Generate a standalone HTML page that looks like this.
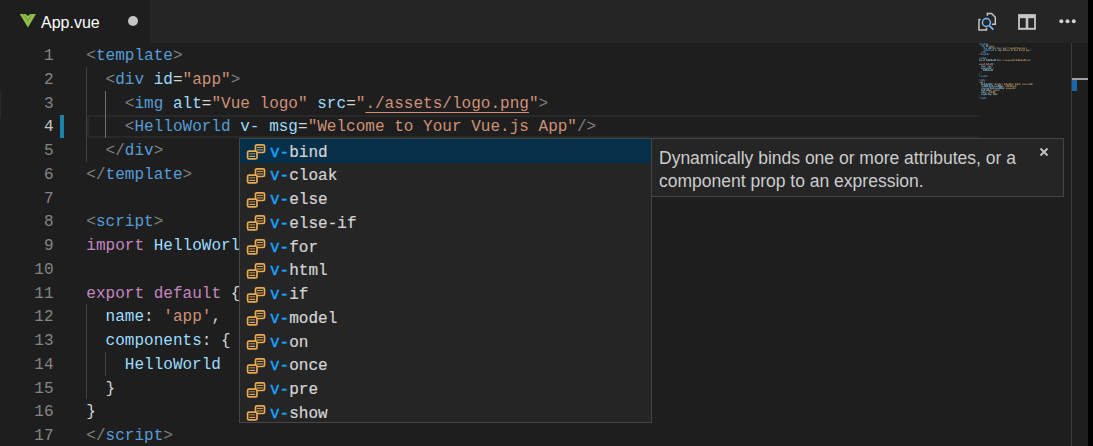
<!DOCTYPE html>
<html><head><meta charset="utf-8"><style>
html,body{margin:0;padding:0;width:1093px;height:446px;overflow:hidden;background:#1e1e1e;}
*{box-sizing:border-box;}
.abs{position:absolute;}
.mono{font-family:"Liberation Mono",monospace;}
.sans{font-family:"Liberation Sans",sans-serif;}
.ln{position:absolute;height:23.75px;line-height:23.75px;white-space:pre;font-size:16.04px;}
.num{position:absolute;left:0;width:53.6px;text-align:right;color:#858585;height:23.75px;line-height:23.75px;font-size:16.04px;}
.code{left:86.3px;}
.u{text-decoration:underline;text-underline-offset:4px;text-decoration-skip-ink:none;}
.guide{position:absolute;width:1px;background:#404040;}
.item{position:absolute;left:0;width:411px;height:23.75px;line-height:23.75px;font-size:16.04px;white-space:pre;color:#d4d4d4;}
.item .h{color:#18a3ff;-webkit-text-stroke:0.35px #18a3ff;}
.item>span{-webkit-text-stroke:0.2px #d4d4d4;}
.mm{position:absolute;height:2px;}
</style></head><body>

<div class="abs" style="left:1088px;top:0;width:5px;height:446px;background:#000"></div>
<div class="abs" style="left:0;top:91px;width:1px;height:27px;background:#2a2a2a"></div>
<div class="abs" style="left:0;top:0;width:1088px;height:43px;background:#252526"></div>
<div class="abs" style="left:0;top:0;width:150px;height:43px;background:#1e1e1e"></div>
<svg class="abs" style="left:19px;top:13px" width="18" height="16" viewBox="0 0 18 16">
<path d="M0.8 1 L17 1 L8.9 14.4 Z" fill="#8dc149"/>
<path d="M6.6 1 L8.9 3 L11.2 1 Z" fill="#1e1e1e"/>
<path d="M4.4 1.2 L8.9 8.1 L12.6 1.5" fill="none" stroke="#6b6a2c" stroke-width="0.9" stroke-dasharray="1.1 0.7"/>
</svg>
<div class="abs sans" style="left:41px;top:11px;font-size:16px;line-height:24px;color:#ffffff;white-space:pre">App.vue</div>
<div class="abs" style="left:128px;top:16px;width:10px;height:10px;border-radius:50%;background:#c5c5c5"></div>
<svg class="abs" style="left:970px;top:5px" width="110" height="34" viewBox="0 0 110 34">
<g fill="none" stroke="#c5c5c5" stroke-width="1.5">
<path d="M17.4 10.8 V8.5 H21.6 L25.3 12.2 V19.3 H21.8"/>
<path d="M10.6 14.4 H9 V24.9 H16.5 V22.8"/>
</g>
<circle cx="16.4" cy="17.55" r="3.95" fill="none" stroke="#75beff" stroke-width="1.5"/>
<path d="M19.3 20.7 L23.4 24.6" stroke="#75beff" stroke-width="1.6"/>
<rect x="48.1" y="9.1" width="17.8" height="15.7" fill="#c5c5c5"/>
<rect x="49.9" y="13.2" width="5.8" height="9.6" fill="#252526"/>
<rect x="58.3" y="13.2" width="5.8" height="9.6" fill="#252526"/>
<circle cx="91.3" cy="16.3" r="2" fill="#d0d0d0"/>
<circle cx="97.5" cy="16.3" r="2" fill="#d0d0d0"/>
<circle cx="103.8" cy="16.3" r="2" fill="#d0d0d0"/>
</svg>
<div class="abs" style="left:87.3px;top:115px;width:891.7px;height:23px;border:2px solid #282828;border-right:none"></div>
<div class="abs" style="left:60px;top:115px;width:4px;height:23px;background:#1a82ad"></div>
<div class="guide" style="left:86px;top:66.75px;height:95.0px;"></div>
<div class="guide" style="left:105px;top:90.5px;height:47.5px;background:#707070"></div>
<div class="guide" style="left:86px;top:304.25px;height:95.0px;"></div>
<div class="guide" style="left:105px;top:351.75px;height:23.75px;"></div>
<div class="num mono" style="top:45.0px;color:#858585">1</div>
<div class="ln mono code" style="top:45.0px"><span style="color:#808080">&lt;</span><span style="color:#569cd6">template</span><span style="color:#808080">&gt;</span></div>
<div class="num mono" style="top:68.75px;color:#858585">2</div>
<div class="ln mono code" style="top:68.75px"><span style="color:#d4d4d4">  </span><span style="color:#808080">&lt;</span><span style="color:#569cd6">div</span><span style="color:#d4d4d4"> </span><span style="color:#9cdcfe">id</span><span style="color:#d4d4d4">=</span><span style="color:#ce9178">&quot;app&quot;</span><span style="color:#808080">&gt;</span></div>
<div class="num mono" style="top:92.5px;color:#858585">3</div>
<div class="ln mono code" style="top:92.5px"><span style="color:#d4d4d4">    </span><span style="color:#808080">&lt;</span><span style="color:#569cd6">img</span><span style="color:#d4d4d4"> </span><span style="color:#9cdcfe">alt</span><span style="color:#d4d4d4">=</span><span style="color:#ce9178">&quot;Vue logo&quot;</span><span style="color:#d4d4d4"> </span><span style="color:#9cdcfe">src</span><span style="color:#d4d4d4">=</span><span style="color:#ce9178">&quot;</span><span class="u" style="color:#ce9178">./assets/logo.png</span><span style="color:#ce9178">&quot;</span><span style="color:#808080">&gt;</span></div>
<div class="num mono" style="top:116.25px;color:#c6c6c6">4</div>
<div class="ln mono code" style="top:116.25px"><span style="color:#d4d4d4">    </span><span style="color:#808080">&lt;</span><span style="color:#569cd6">HelloWorld</span><span style="color:#d4d4d4"> </span><span style="color:#9cdcfe">v-</span><span style="color:#d4d4d4"> </span><span style="color:#9cdcfe">msg</span><span style="color:#d4d4d4">=</span><span style="color:#ce9178">&quot;Welcome to Your Vue.js App&quot;</span><span style="color:#808080">/&gt;</span></div>
<div class="num mono" style="top:140.0px;color:#858585">5</div>
<div class="ln mono code" style="top:140.0px"><span style="color:#d4d4d4">  </span><span style="color:#808080">&lt;/</span><span style="color:#569cd6">div</span><span style="color:#808080">&gt;</span></div>
<div class="num mono" style="top:163.75px;color:#858585">6</div>
<div class="ln mono code" style="top:163.75px"><span style="color:#808080">&lt;/</span><span style="color:#569cd6">template</span><span style="color:#808080">&gt;</span></div>
<div class="num mono" style="top:187.5px;color:#858585">7</div>
<div class="ln mono code" style="top:187.5px"></div>
<div class="num mono" style="top:211.25px;color:#858585">8</div>
<div class="ln mono code" style="top:211.25px"><span style="color:#808080">&lt;</span><span style="color:#569cd6">script</span><span style="color:#808080">&gt;</span></div>
<div class="num mono" style="top:235.0px;color:#858585">9</div>
<div class="ln mono code" style="top:235.0px"><span style="color:#c586c0">import</span><span style="color:#d4d4d4"> </span><span style="color:#9cdcfe">HelloWorld</span><span style="color:#d4d4d4"> </span><span style="color:#c586c0">from</span><span style="color:#d4d4d4"> </span><span style="color:#ce9178">&#x27;./components/HelloWorld.vue&#x27;</span></div>
<div class="num mono" style="top:258.75px;color:#858585">10</div>
<div class="ln mono code" style="top:258.75px"></div>
<div class="num mono" style="top:282.5px;color:#858585">11</div>
<div class="ln mono code" style="top:282.5px"><span style="color:#c586c0">export</span><span style="color:#d4d4d4"> </span><span style="color:#c586c0">default</span><span style="color:#d4d4d4"> </span><span style="color:#d4d4d4">{</span></div>
<div class="num mono" style="top:306.25px;color:#858585">12</div>
<div class="ln mono code" style="top:306.25px"><span style="color:#d4d4d4">  </span><span style="color:#9cdcfe">name</span><span style="color:#d4d4d4">: </span><span style="color:#ce9178">&#x27;app&#x27;</span><span style="color:#d4d4d4">,</span></div>
<div class="num mono" style="top:330.0px;color:#858585">13</div>
<div class="ln mono code" style="top:330.0px"><span style="color:#d4d4d4">  </span><span style="color:#9cdcfe">components</span><span style="color:#d4d4d4">: </span><span style="color:#d4d4d4">{</span></div>
<div class="num mono" style="top:353.75px;color:#858585">14</div>
<div class="ln mono code" style="top:353.75px"><span style="color:#d4d4d4">    </span><span style="color:#9cdcfe">HelloWorld</span></div>
<div class="num mono" style="top:377.5px;color:#858585">15</div>
<div class="ln mono code" style="top:377.5px"><span style="color:#d4d4d4">  </span><span style="color:#d4d4d4">}</span></div>
<div class="num mono" style="top:401.25px;color:#858585">16</div>
<div class="ln mono code" style="top:401.25px"><span style="color:#d4d4d4">}</span></div>
<div class="num mono" style="top:425.0px;color:#858585">17</div>
<div class="ln mono code" style="top:425.0px"><span style="color:#808080">&lt;/</span><span style="color:#569cd6">script</span><span style="color:#808080">&gt;</span></div>
<svg class="abs" style="left:979px;top:43.3px" width="92" height="62" viewBox="0 0 92 62"><rect x="0" y="0.5" width="0.8" height="1.0" fill="#808080" opacity="0.45"/><rect x="1" y="0.1" width="0.8" height="1.8" fill="#569cd6" opacity="0.68"/><rect x="2" y="0.7" width="0.8" height="1.2" fill="#569cd6" opacity="0.62"/><rect x="3" y="0.7" width="0.8" height="1.2" fill="#569cd6" opacity="0.62"/><rect x="4" y="0.7" width="0.8" height="1.6" fill="#569cd6" opacity="0.62"/><rect x="5" y="0.1" width="0.8" height="1.8" fill="#569cd6" opacity="0.68"/><rect x="6" y="0.7" width="0.8" height="1.2" fill="#569cd6" opacity="0.62"/><rect x="7" y="0.1" width="0.8" height="1.8" fill="#569cd6" opacity="0.68"/><rect x="8" y="0.7" width="0.8" height="1.2" fill="#569cd6" opacity="0.62"/><rect x="9" y="0.5" width="0.8" height="1.0" fill="#808080" opacity="0.45"/><rect x="2" y="2.5" width="0.8" height="1.0" fill="#808080" opacity="0.45"/><rect x="3" y="2.1" width="0.8" height="1.8" fill="#569cd6" opacity="0.68"/><rect x="4" y="2.1" width="0.8" height="1.8" fill="#569cd6" opacity="0.68"/><rect x="5" y="2.7" width="0.8" height="1.2" fill="#569cd6" opacity="0.62"/><rect x="7" y="2.1" width="0.8" height="1.8" fill="#9cdcfe" opacity="0.68"/><rect x="8" y="2.1" width="0.8" height="1.8" fill="#9cdcfe" opacity="0.68"/><rect x="9" y="2.5" width="0.8" height="1.0" fill="#d4d4d4" opacity="0.45"/><rect x="10" y="2.5" width="0.8" height="1.0" fill="#d4a872" opacity="0.45"/><rect x="11" y="2.7" width="0.8" height="1.2" fill="#d4a872" opacity="0.62"/><rect x="12" y="2.7" width="0.8" height="1.6" fill="#d4a872" opacity="0.62"/><rect x="13" y="2.7" width="0.8" height="1.6" fill="#d4a872" opacity="0.62"/><rect x="14" y="2.5" width="0.8" height="1.0" fill="#d4a872" opacity="0.45"/><rect x="15" y="2.5" width="0.8" height="1.0" fill="#808080" opacity="0.45"/><rect x="4" y="4.5" width="0.8" height="1.0" fill="#808080" opacity="0.45"/><rect x="5" y="4.1" width="0.8" height="1.8" fill="#569cd6" opacity="0.68"/><rect x="6" y="4.7" width="0.8" height="1.2" fill="#569cd6" opacity="0.62"/><rect x="7" y="4.7" width="0.8" height="1.6" fill="#569cd6" opacity="0.62"/><rect x="9" y="4.7" width="0.8" height="1.2" fill="#9cdcfe" opacity="0.62"/><rect x="10" y="4.1" width="0.8" height="1.8" fill="#9cdcfe" opacity="0.68"/><rect x="11" y="4.1" width="0.8" height="1.8" fill="#9cdcfe" opacity="0.68"/><rect x="12" y="4.5" width="0.8" height="1.0" fill="#d4d4d4" opacity="0.45"/><rect x="13" y="4.5" width="0.8" height="1.0" fill="#d4a872" opacity="0.45"/><rect x="14" y="4.1" width="0.8" height="1.8" fill="#d4a872" opacity="0.68"/><rect x="15" y="4.7" width="0.8" height="1.2" fill="#d4a872" opacity="0.62"/><rect x="16" y="4.7" width="0.8" height="1.2" fill="#d4a872" opacity="0.62"/><rect x="18" y="4.1" width="0.8" height="1.8" fill="#d4a872" opacity="0.68"/><rect x="19" y="4.7" width="0.8" height="1.2" fill="#d4a872" opacity="0.62"/><rect x="20" y="4.7" width="0.8" height="1.6" fill="#d4a872" opacity="0.62"/><rect x="21" y="4.7" width="0.8" height="1.2" fill="#d4a872" opacity="0.62"/><rect x="22" y="4.5" width="0.8" height="1.0" fill="#d4a872" opacity="0.45"/><rect x="24" y="4.7" width="0.8" height="1.2" fill="#9cdcfe" opacity="0.62"/><rect x="25" y="4.7" width="0.8" height="1.2" fill="#9cdcfe" opacity="0.62"/><rect x="26" y="4.7" width="0.8" height="1.2" fill="#9cdcfe" opacity="0.62"/><rect x="27" y="4.5" width="0.8" height="1.0" fill="#d4d4d4" opacity="0.45"/><rect x="28" y="4.5" width="0.8" height="1.0" fill="#d4a872" opacity="0.45"/><rect x="29" y="4.5" width="0.8" height="1.0" fill="#d4a872" opacity="0.45"/><rect x="30" y="4.5" width="0.8" height="1.0" fill="#d4a872" opacity="0.45"/><rect x="31" y="4.7" width="0.8" height="1.2" fill="#d4a872" opacity="0.62"/><rect x="32" y="4.7" width="0.8" height="1.2" fill="#d4a872" opacity="0.62"/><rect x="33" y="4.7" width="0.8" height="1.2" fill="#d4a872" opacity="0.62"/><rect x="34" y="4.7" width="0.8" height="1.2" fill="#d4a872" opacity="0.62"/><rect x="35" y="4.1" width="0.8" height="1.8" fill="#d4a872" opacity="0.68"/><rect x="36" y="4.7" width="0.8" height="1.2" fill="#d4a872" opacity="0.62"/><rect x="37" y="4.5" width="0.8" height="1.0" fill="#d4a872" opacity="0.45"/><rect x="38" y="4.1" width="0.8" height="1.8" fill="#d4a872" opacity="0.68"/><rect x="39" y="4.7" width="0.8" height="1.2" fill="#d4a872" opacity="0.62"/><rect x="40" y="4.7" width="0.8" height="1.6" fill="#d4a872" opacity="0.62"/><rect x="41" y="4.7" width="0.8" height="1.2" fill="#d4a872" opacity="0.62"/><rect x="42" y="4.5" width="0.8" height="1.0" fill="#d4a872" opacity="0.45"/><rect x="43" y="4.7" width="0.8" height="1.6" fill="#d4a872" opacity="0.62"/><rect x="44" y="4.7" width="0.8" height="1.2" fill="#d4a872" opacity="0.62"/><rect x="45" y="4.7" width="0.8" height="1.6" fill="#d4a872" opacity="0.62"/><rect x="46" y="4.5" width="0.8" height="1.0" fill="#d4a872" opacity="0.45"/><rect x="47" y="4.5" width="0.8" height="1.0" fill="#808080" opacity="0.45"/><rect x="4" y="6.5" width="0.8" height="1.0" fill="#808080" opacity="0.45"/><rect x="5" y="6.1" width="0.8" height="1.8" fill="#569cd6" opacity="0.68"/><rect x="6" y="6.7" width="0.8" height="1.2" fill="#569cd6" opacity="0.62"/><rect x="7" y="6.1" width="0.8" height="1.8" fill="#569cd6" opacity="0.68"/><rect x="8" y="6.1" width="0.8" height="1.8" fill="#569cd6" opacity="0.68"/><rect x="9" y="6.7" width="0.8" height="1.2" fill="#569cd6" opacity="0.62"/><rect x="10" y="6.1" width="0.8" height="1.8" fill="#569cd6" opacity="0.68"/><rect x="11" y="6.7" width="0.8" height="1.2" fill="#569cd6" opacity="0.62"/><rect x="12" y="6.7" width="0.8" height="1.2" fill="#569cd6" opacity="0.62"/><rect x="13" y="6.1" width="0.8" height="1.8" fill="#569cd6" opacity="0.68"/><rect x="14" y="6.1" width="0.8" height="1.8" fill="#569cd6" opacity="0.68"/><rect x="16" y="6.7" width="0.8" height="1.2" fill="#9cdcfe" opacity="0.62"/><rect x="17" y="6.5" width="0.8" height="1.0" fill="#9cdcfe" opacity="0.45"/><rect x="19" y="6.7" width="0.8" height="1.2" fill="#9cdcfe" opacity="0.62"/><rect x="20" y="6.7" width="0.8" height="1.2" fill="#9cdcfe" opacity="0.62"/><rect x="21" y="6.7" width="0.8" height="1.6" fill="#9cdcfe" opacity="0.62"/><rect x="22" y="6.5" width="0.8" height="1.0" fill="#d4d4d4" opacity="0.45"/><rect x="23" y="6.5" width="0.8" height="1.0" fill="#d4a872" opacity="0.45"/><rect x="24" y="6.1" width="0.8" height="1.8" fill="#d4a872" opacity="0.68"/><rect x="25" y="6.7" width="0.8" height="1.2" fill="#d4a872" opacity="0.62"/><rect x="26" y="6.1" width="0.8" height="1.8" fill="#d4a872" opacity="0.68"/><rect x="27" y="6.7" width="0.8" height="1.2" fill="#d4a872" opacity="0.62"/><rect x="28" y="6.7" width="0.8" height="1.2" fill="#d4a872" opacity="0.62"/><rect x="29" y="6.7" width="0.8" height="1.2" fill="#d4a872" opacity="0.62"/><rect x="30" y="6.7" width="0.8" height="1.2" fill="#d4a872" opacity="0.62"/><rect x="32" y="6.1" width="0.8" height="1.8" fill="#d4a872" opacity="0.68"/><rect x="33" y="6.7" width="0.8" height="1.2" fill="#d4a872" opacity="0.62"/><rect x="35" y="6.1" width="0.8" height="1.8" fill="#d4a872" opacity="0.68"/><rect x="36" y="6.7" width="0.8" height="1.2" fill="#d4a872" opacity="0.62"/><rect x="37" y="6.7" width="0.8" height="1.2" fill="#d4a872" opacity="0.62"/><rect x="38" y="6.7" width="0.8" height="1.2" fill="#d4a872" opacity="0.62"/><rect x="40" y="6.1" width="0.8" height="1.8" fill="#d4a872" opacity="0.68"/><rect x="41" y="6.7" width="0.8" height="1.2" fill="#d4a872" opacity="0.62"/><rect x="42" y="6.7" width="0.8" height="1.2" fill="#d4a872" opacity="0.62"/><rect x="43" y="6.5" width="0.8" height="1.0" fill="#d4a872" opacity="0.45"/><rect x="44" y="6.7" width="0.8" height="1.6" fill="#d4a872" opacity="0.62"/><rect x="45" y="6.7" width="0.8" height="1.2" fill="#d4a872" opacity="0.62"/><rect x="47" y="6.1" width="0.8" height="1.8" fill="#d4a872" opacity="0.68"/><rect x="48" y="6.7" width="0.8" height="1.6" fill="#d4a872" opacity="0.62"/><rect x="49" y="6.7" width="0.8" height="1.6" fill="#d4a872" opacity="0.62"/><rect x="50" y="6.5" width="0.8" height="1.0" fill="#d4a872" opacity="0.45"/><rect x="51" y="6.5" width="0.8" height="1.0" fill="#808080" opacity="0.45"/><rect x="52" y="6.5" width="0.8" height="1.0" fill="#808080" opacity="0.45"/><rect x="2" y="8.5" width="0.8" height="1.0" fill="#808080" opacity="0.45"/><rect x="3" y="8.5" width="0.8" height="1.0" fill="#808080" opacity="0.45"/><rect x="4" y="8.1" width="0.8" height="1.8" fill="#569cd6" opacity="0.68"/><rect x="5" y="8.1" width="0.8" height="1.8" fill="#569cd6" opacity="0.68"/><rect x="6" y="8.7" width="0.8" height="1.2" fill="#569cd6" opacity="0.62"/><rect x="7" y="8.5" width="0.8" height="1.0" fill="#808080" opacity="0.45"/><rect x="0" y="10.5" width="0.8" height="1.0" fill="#808080" opacity="0.45"/><rect x="1" y="10.5" width="0.8" height="1.0" fill="#808080" opacity="0.45"/><rect x="2" y="10.1" width="0.8" height="1.8" fill="#569cd6" opacity="0.68"/><rect x="3" y="10.7" width="0.8" height="1.2" fill="#569cd6" opacity="0.62"/><rect x="4" y="10.7" width="0.8" height="1.2" fill="#569cd6" opacity="0.62"/><rect x="5" y="10.7" width="0.8" height="1.6" fill="#569cd6" opacity="0.62"/><rect x="6" y="10.1" width="0.8" height="1.8" fill="#569cd6" opacity="0.68"/><rect x="7" y="10.7" width="0.8" height="1.2" fill="#569cd6" opacity="0.62"/><rect x="8" y="10.1" width="0.8" height="1.8" fill="#569cd6" opacity="0.68"/><rect x="9" y="10.7" width="0.8" height="1.2" fill="#569cd6" opacity="0.62"/><rect x="10" y="10.5" width="0.8" height="1.0" fill="#808080" opacity="0.45"/><rect x="0" y="14.5" width="0.8" height="1.0" fill="#808080" opacity="0.45"/><rect x="1" y="14.7" width="0.8" height="1.2" fill="#569cd6" opacity="0.62"/><rect x="2" y="14.7" width="0.8" height="1.2" fill="#569cd6" opacity="0.62"/><rect x="3" y="14.7" width="0.8" height="1.2" fill="#569cd6" opacity="0.62"/><rect x="4" y="14.1" width="0.8" height="1.8" fill="#569cd6" opacity="0.68"/><rect x="5" y="14.7" width="0.8" height="1.6" fill="#569cd6" opacity="0.62"/><rect x="6" y="14.1" width="0.8" height="1.8" fill="#569cd6" opacity="0.68"/><rect x="7" y="14.5" width="0.8" height="1.0" fill="#808080" opacity="0.45"/><rect x="0" y="16.1" width="0.8" height="1.8" fill="#b8a8b8" opacity="0.68"/><rect x="1" y="16.7" width="0.8" height="1.2" fill="#b8a8b8" opacity="0.62"/><rect x="2" y="16.7" width="0.8" height="1.6" fill="#b8a8b8" opacity="0.62"/><rect x="3" y="16.7" width="0.8" height="1.2" fill="#b8a8b8" opacity="0.62"/><rect x="4" y="16.7" width="0.8" height="1.2" fill="#b8a8b8" opacity="0.62"/><rect x="5" y="16.1" width="0.8" height="1.8" fill="#b8a8b8" opacity="0.68"/><rect x="7" y="16.1" width="0.8" height="1.8" fill="#9cdcfe" opacity="0.68"/><rect x="8" y="16.7" width="0.8" height="1.2" fill="#9cdcfe" opacity="0.62"/><rect x="9" y="16.1" width="0.8" height="1.8" fill="#9cdcfe" opacity="0.68"/><rect x="10" y="16.1" width="0.8" height="1.8" fill="#9cdcfe" opacity="0.68"/><rect x="11" y="16.7" width="0.8" height="1.2" fill="#9cdcfe" opacity="0.62"/><rect x="12" y="16.1" width="0.8" height="1.8" fill="#9cdcfe" opacity="0.68"/><rect x="13" y="16.7" width="0.8" height="1.2" fill="#9cdcfe" opacity="0.62"/><rect x="14" y="16.7" width="0.8" height="1.2" fill="#9cdcfe" opacity="0.62"/><rect x="15" y="16.1" width="0.8" height="1.8" fill="#9cdcfe" opacity="0.68"/><rect x="16" y="16.1" width="0.8" height="1.8" fill="#9cdcfe" opacity="0.68"/><rect x="18" y="16.1" width="0.8" height="1.8" fill="#b8a8b8" opacity="0.68"/><rect x="19" y="16.7" width="0.8" height="1.2" fill="#b8a8b8" opacity="0.62"/><rect x="20" y="16.7" width="0.8" height="1.2" fill="#b8a8b8" opacity="0.62"/><rect x="21" y="16.7" width="0.8" height="1.2" fill="#b8a8b8" opacity="0.62"/><rect x="23" y="16.5" width="0.8" height="1.0" fill="#d4a872" opacity="0.45"/><rect x="24" y="16.5" width="0.8" height="1.0" fill="#d4a872" opacity="0.45"/><rect x="25" y="16.5" width="0.8" height="1.0" fill="#d4a872" opacity="0.45"/><rect x="26" y="16.7" width="0.8" height="1.2" fill="#d4a872" opacity="0.62"/><rect x="27" y="16.7" width="0.8" height="1.2" fill="#d4a872" opacity="0.62"/><rect x="28" y="16.7" width="0.8" height="1.2" fill="#d4a872" opacity="0.62"/><rect x="29" y="16.7" width="0.8" height="1.6" fill="#d4a872" opacity="0.62"/><rect x="30" y="16.7" width="0.8" height="1.2" fill="#d4a872" opacity="0.62"/><rect x="31" y="16.7" width="0.8" height="1.2" fill="#d4a872" opacity="0.62"/><rect x="32" y="16.7" width="0.8" height="1.2" fill="#d4a872" opacity="0.62"/><rect x="33" y="16.7" width="0.8" height="1.2" fill="#d4a872" opacity="0.62"/><rect x="34" y="16.1" width="0.8" height="1.8" fill="#d4a872" opacity="0.68"/><rect x="35" y="16.7" width="0.8" height="1.2" fill="#d4a872" opacity="0.62"/><rect x="36" y="16.5" width="0.8" height="1.0" fill="#d4a872" opacity="0.45"/><rect x="37" y="16.1" width="0.8" height="1.8" fill="#d4a872" opacity="0.68"/><rect x="38" y="16.7" width="0.8" height="1.2" fill="#d4a872" opacity="0.62"/><rect x="39" y="16.1" width="0.8" height="1.8" fill="#d4a872" opacity="0.68"/><rect x="40" y="16.1" width="0.8" height="1.8" fill="#d4a872" opacity="0.68"/><rect x="41" y="16.7" width="0.8" height="1.2" fill="#d4a872" opacity="0.62"/><rect x="42" y="16.1" width="0.8" height="1.8" fill="#d4a872" opacity="0.68"/><rect x="43" y="16.7" width="0.8" height="1.2" fill="#d4a872" opacity="0.62"/><rect x="44" y="16.7" width="0.8" height="1.2" fill="#d4a872" opacity="0.62"/><rect x="45" y="16.1" width="0.8" height="1.8" fill="#d4a872" opacity="0.68"/><rect x="46" y="16.1" width="0.8" height="1.8" fill="#d4a872" opacity="0.68"/><rect x="47" y="16.5" width="0.8" height="1.0" fill="#d4a872" opacity="0.45"/><rect x="48" y="16.7" width="0.8" height="1.2" fill="#d4a872" opacity="0.62"/><rect x="49" y="16.7" width="0.8" height="1.2" fill="#d4a872" opacity="0.62"/><rect x="50" y="16.7" width="0.8" height="1.2" fill="#d4a872" opacity="0.62"/><rect x="51" y="16.5" width="0.8" height="1.0" fill="#d4a872" opacity="0.45"/><rect x="0" y="20.7" width="0.8" height="1.2" fill="#b8a8b8" opacity="0.62"/><rect x="1" y="20.7" width="0.8" height="1.2" fill="#b8a8b8" opacity="0.62"/><rect x="2" y="20.7" width="0.8" height="1.6" fill="#b8a8b8" opacity="0.62"/><rect x="3" y="20.7" width="0.8" height="1.2" fill="#b8a8b8" opacity="0.62"/><rect x="4" y="20.7" width="0.8" height="1.2" fill="#b8a8b8" opacity="0.62"/><rect x="5" y="20.1" width="0.8" height="1.8" fill="#b8a8b8" opacity="0.68"/><rect x="7" y="20.1" width="0.8" height="1.8" fill="#b8a8b8" opacity="0.68"/><rect x="8" y="20.7" width="0.8" height="1.2" fill="#b8a8b8" opacity="0.62"/><rect x="9" y="20.1" width="0.8" height="1.8" fill="#b8a8b8" opacity="0.68"/><rect x="10" y="20.7" width="0.8" height="1.2" fill="#b8a8b8" opacity="0.62"/><rect x="11" y="20.7" width="0.8" height="1.2" fill="#b8a8b8" opacity="0.62"/><rect x="12" y="20.1" width="0.8" height="1.8" fill="#b8a8b8" opacity="0.68"/><rect x="13" y="20.1" width="0.8" height="1.8" fill="#b8a8b8" opacity="0.68"/><rect x="15" y="20.5" width="0.8" height="1.0" fill="#d4d4d4" opacity="0.45"/><rect x="2" y="22.7" width="0.8" height="1.2" fill="#9cdcfe" opacity="0.62"/><rect x="3" y="22.7" width="0.8" height="1.2" fill="#9cdcfe" opacity="0.62"/><rect x="4" y="22.7" width="0.8" height="1.2" fill="#9cdcfe" opacity="0.62"/><rect x="5" y="22.7" width="0.8" height="1.2" fill="#9cdcfe" opacity="0.62"/><rect x="6" y="22.5" width="0.8" height="1.0" fill="#d4d4d4" opacity="0.45"/><rect x="8" y="22.5" width="0.8" height="1.0" fill="#d4a872" opacity="0.45"/><rect x="9" y="22.7" width="0.8" height="1.2" fill="#d4a872" opacity="0.62"/><rect x="10" y="22.7" width="0.8" height="1.6" fill="#d4a872" opacity="0.62"/><rect x="11" y="22.7" width="0.8" height="1.6" fill="#d4a872" opacity="0.62"/><rect x="12" y="22.5" width="0.8" height="1.0" fill="#d4a872" opacity="0.45"/><rect x="13" y="22.5" width="0.8" height="1.0" fill="#d4d4d4" opacity="0.45"/><rect x="2" y="24.7" width="0.8" height="1.2" fill="#9cdcfe" opacity="0.62"/><rect x="3" y="24.7" width="0.8" height="1.2" fill="#9cdcfe" opacity="0.62"/><rect x="4" y="24.7" width="0.8" height="1.2" fill="#9cdcfe" opacity="0.62"/><rect x="5" y="24.7" width="0.8" height="1.6" fill="#9cdcfe" opacity="0.62"/><rect x="6" y="24.7" width="0.8" height="1.2" fill="#9cdcfe" opacity="0.62"/><rect x="7" y="24.7" width="0.8" height="1.2" fill="#9cdcfe" opacity="0.62"/><rect x="8" y="24.7" width="0.8" height="1.2" fill="#9cdcfe" opacity="0.62"/><rect x="9" y="24.7" width="0.8" height="1.2" fill="#9cdcfe" opacity="0.62"/><rect x="10" y="24.1" width="0.8" height="1.8" fill="#9cdcfe" opacity="0.68"/><rect x="11" y="24.7" width="0.8" height="1.2" fill="#9cdcfe" opacity="0.62"/><rect x="12" y="24.5" width="0.8" height="1.0" fill="#d4d4d4" opacity="0.45"/><rect x="14" y="24.5" width="0.8" height="1.0" fill="#d4d4d4" opacity="0.45"/><rect x="4" y="26.1" width="0.8" height="1.8" fill="#9cdcfe" opacity="0.68"/><rect x="5" y="26.7" width="0.8" height="1.2" fill="#9cdcfe" opacity="0.62"/><rect x="6" y="26.1" width="0.8" height="1.8" fill="#9cdcfe" opacity="0.68"/><rect x="7" y="26.1" width="0.8" height="1.8" fill="#9cdcfe" opacity="0.68"/><rect x="8" y="26.7" width="0.8" height="1.2" fill="#9cdcfe" opacity="0.62"/><rect x="9" y="26.1" width="0.8" height="1.8" fill="#9cdcfe" opacity="0.68"/><rect x="10" y="26.7" width="0.8" height="1.2" fill="#9cdcfe" opacity="0.62"/><rect x="11" y="26.7" width="0.8" height="1.2" fill="#9cdcfe" opacity="0.62"/><rect x="12" y="26.1" width="0.8" height="1.8" fill="#9cdcfe" opacity="0.68"/><rect x="13" y="26.1" width="0.8" height="1.8" fill="#9cdcfe" opacity="0.68"/><rect x="2" y="28.5" width="0.8" height="1.0" fill="#d4d4d4" opacity="0.45"/><rect x="0" y="30.5" width="0.8" height="1.0" fill="#d4d4d4" opacity="0.45"/><rect x="0" y="32.5" width="0.8" height="1.0" fill="#808080" opacity="0.45"/><rect x="1" y="32.5" width="0.8" height="1.0" fill="#808080" opacity="0.45"/><rect x="2" y="32.7" width="0.8" height="1.2" fill="#569cd6" opacity="0.62"/><rect x="3" y="32.7" width="0.8" height="1.2" fill="#569cd6" opacity="0.62"/><rect x="4" y="32.7" width="0.8" height="1.2" fill="#569cd6" opacity="0.62"/><rect x="5" y="32.1" width="0.8" height="1.8" fill="#569cd6" opacity="0.68"/><rect x="6" y="32.7" width="0.8" height="1.6" fill="#569cd6" opacity="0.62"/><rect x="7" y="32.1" width="0.8" height="1.8" fill="#569cd6" opacity="0.68"/><rect x="8" y="32.5" width="0.8" height="1.0" fill="#808080" opacity="0.45"/><rect x="0" y="36.5" width="0.8" height="1.0" fill="#808080" opacity="0.45"/><rect x="1" y="36.7" width="0.8" height="1.2" fill="#569cd6" opacity="0.62"/><rect x="2" y="36.1" width="0.8" height="1.8" fill="#569cd6" opacity="0.68"/><rect x="3" y="36.7" width="0.8" height="1.6" fill="#569cd6" opacity="0.62"/><rect x="4" y="36.1" width="0.8" height="1.8" fill="#569cd6" opacity="0.68"/><rect x="5" y="36.7" width="0.8" height="1.2" fill="#569cd6" opacity="0.62"/><rect x="6" y="36.5" width="0.8" height="1.0" fill="#808080" opacity="0.45"/><rect x="0" y="38.5" width="0.8" height="1.0" fill="#d7ba7d" opacity="0.45"/><rect x="1" y="38.7" width="0.8" height="1.2" fill="#d7ba7d" opacity="0.62"/><rect x="2" y="38.7" width="0.8" height="1.6" fill="#d7ba7d" opacity="0.62"/><rect x="3" y="38.7" width="0.8" height="1.6" fill="#d7ba7d" opacity="0.62"/><rect x="5" y="38.5" width="0.8" height="1.0" fill="#d4d4d4" opacity="0.45"/><rect x="2" y="40.1" width="0.8" height="1.8" fill="#9cdcfe" opacity="0.68"/><rect x="3" y="40.7" width="0.8" height="1.2" fill="#9cdcfe" opacity="0.62"/><rect x="4" y="40.7" width="0.8" height="1.2" fill="#9cdcfe" opacity="0.62"/><rect x="5" y="40.1" width="0.8" height="1.8" fill="#9cdcfe" opacity="0.68"/><rect x="6" y="40.5" width="0.8" height="1.0" fill="#9cdcfe" opacity="0.45"/><rect x="7" y="40.1" width="0.8" height="1.8" fill="#9cdcfe" opacity="0.68"/><rect x="8" y="40.7" width="0.8" height="1.2" fill="#9cdcfe" opacity="0.62"/><rect x="9" y="40.7" width="0.8" height="1.2" fill="#9cdcfe" opacity="0.62"/><rect x="10" y="40.1" width="0.8" height="1.8" fill="#9cdcfe" opacity="0.68"/><rect x="11" y="40.1" width="0.8" height="1.8" fill="#9cdcfe" opacity="0.68"/><rect x="12" y="40.7" width="0.8" height="1.6" fill="#9cdcfe" opacity="0.62"/><rect x="13" y="40.5" width="0.8" height="1.0" fill="#d4d4d4" opacity="0.45"/><rect x="15" y="40.5" width="0.8" height="1.0" fill="#d4a872" opacity="0.45"/><rect x="16" y="40.1" width="0.8" height="1.8" fill="#d4a872" opacity="0.68"/><rect x="17" y="40.7" width="0.8" height="1.2" fill="#d4a872" opacity="0.62"/><rect x="18" y="40.7" width="0.8" height="1.2" fill="#d4a872" opacity="0.62"/><rect x="19" y="40.7" width="0.8" height="1.2" fill="#d4a872" opacity="0.62"/><rect x="20" y="40.1" width="0.8" height="1.8" fill="#d4a872" opacity="0.68"/><rect x="21" y="40.7" width="0.8" height="1.2" fill="#d4a872" opacity="0.62"/><rect x="22" y="40.5" width="0.8" height="1.0" fill="#d4a872" opacity="0.45"/><rect x="23" y="40.5" width="0.8" height="1.0" fill="#d4a872" opacity="0.45"/><rect x="25" y="40.1" width="0.8" height="1.8" fill="#d4a872" opacity="0.68"/><rect x="26" y="40.7" width="0.8" height="1.2" fill="#d4a872" opacity="0.62"/><rect x="27" y="40.1" width="0.8" height="1.8" fill="#d4a872" opacity="0.68"/><rect x="28" y="40.7" width="0.8" height="1.2" fill="#d4a872" opacity="0.62"/><rect x="29" y="40.7" width="0.8" height="1.2" fill="#d4a872" opacity="0.62"/><rect x="30" y="40.1" width="0.8" height="1.8" fill="#d4a872" opacity="0.68"/><rect x="31" y="40.1" width="0.8" height="1.8" fill="#d4a872" opacity="0.68"/><rect x="32" y="40.7" width="0.8" height="1.2" fill="#d4a872" opacity="0.62"/><rect x="33" y="40.7" width="0.8" height="1.2" fill="#d4a872" opacity="0.62"/><rect x="34" y="40.5" width="0.8" height="1.0" fill="#d4a872" opacity="0.45"/><rect x="36" y="40.1" width="0.8" height="1.8" fill="#d4a872" opacity="0.68"/><rect x="37" y="40.7" width="0.8" height="1.2" fill="#d4a872" opacity="0.62"/><rect x="38" y="40.1" width="0.8" height="1.8" fill="#d4a872" opacity="0.68"/><rect x="39" y="40.7" width="0.8" height="1.2" fill="#d4a872" opacity="0.62"/><rect x="40" y="40.1" width="0.8" height="1.8" fill="#d4a872" opacity="0.68"/><rect x="41" y="40.5" width="0.8" height="1.0" fill="#d4a872" opacity="0.45"/><rect x="43" y="40.7" width="0.8" height="1.2" fill="#d4a872" opacity="0.62"/><rect x="44" y="40.7" width="0.8" height="1.2" fill="#d4a872" opacity="0.62"/><rect x="45" y="40.7" width="0.8" height="1.2" fill="#d4a872" opacity="0.62"/><rect x="46" y="40.7" width="0.8" height="1.2" fill="#d4a872" opacity="0.62"/><rect x="47" y="40.5" width="0.8" height="1.0" fill="#d4a872" opacity="0.45"/><rect x="48" y="40.7" width="0.8" height="1.2" fill="#d4a872" opacity="0.62"/><rect x="49" y="40.7" width="0.8" height="1.2" fill="#d4a872" opacity="0.62"/><rect x="50" y="40.7" width="0.8" height="1.2" fill="#d4a872" opacity="0.62"/><rect x="51" y="40.1" width="0.8" height="1.8" fill="#d4a872" opacity="0.68"/><rect x="52" y="40.1" width="0.8" height="1.8" fill="#d4a872" opacity="0.68"/><rect x="53" y="40.5" width="0.8" height="1.0" fill="#d4d4d4" opacity="0.45"/><rect x="2" y="42.5" width="0.8" height="1.0" fill="#9cdcfe" opacity="0.45"/><rect x="3" y="42.7" width="0.8" height="1.2" fill="#9cdcfe" opacity="0.62"/><rect x="4" y="42.7" width="0.8" height="1.2" fill="#9cdcfe" opacity="0.62"/><rect x="5" y="42.1" width="0.8" height="1.8" fill="#9cdcfe" opacity="0.68"/><rect x="6" y="42.1" width="0.8" height="1.8" fill="#9cdcfe" opacity="0.68"/><rect x="7" y="42.1" width="0.8" height="1.8" fill="#9cdcfe" opacity="0.68"/><rect x="8" y="42.1" width="0.8" height="1.8" fill="#9cdcfe" opacity="0.68"/><rect x="9" y="42.5" width="0.8" height="1.0" fill="#9cdcfe" opacity="0.45"/><rect x="10" y="42.1" width="0.8" height="1.8" fill="#9cdcfe" opacity="0.68"/><rect x="11" y="42.7" width="0.8" height="1.2" fill="#9cdcfe" opacity="0.62"/><rect x="12" y="42.7" width="0.8" height="1.2" fill="#9cdcfe" opacity="0.62"/><rect x="13" y="42.1" width="0.8" height="1.8" fill="#9cdcfe" opacity="0.68"/><rect x="14" y="42.5" width="0.8" height="1.0" fill="#9cdcfe" opacity="0.45"/><rect x="15" y="42.7" width="0.8" height="1.2" fill="#9cdcfe" opacity="0.62"/><rect x="16" y="42.7" width="0.8" height="1.2" fill="#9cdcfe" opacity="0.62"/><rect x="17" y="42.7" width="0.8" height="1.2" fill="#9cdcfe" opacity="0.62"/><rect x="18" y="42.7" width="0.8" height="1.2" fill="#9cdcfe" opacity="0.62"/><rect x="19" y="42.1" width="0.8" height="1.8" fill="#9cdcfe" opacity="0.68"/><rect x="20" y="42.1" width="0.8" height="1.8" fill="#9cdcfe" opacity="0.68"/><rect x="21" y="42.1" width="0.8" height="1.8" fill="#9cdcfe" opacity="0.68"/><rect x="22" y="42.7" width="0.8" height="1.2" fill="#9cdcfe" opacity="0.62"/><rect x="23" y="42.7" width="0.8" height="1.6" fill="#9cdcfe" opacity="0.62"/><rect x="24" y="42.5" width="0.8" height="1.0" fill="#d4d4d4" opacity="0.45"/><rect x="26" y="42.7" width="0.8" height="1.2" fill="#d4a872" opacity="0.62"/><rect x="27" y="42.7" width="0.8" height="1.2" fill="#d4a872" opacity="0.62"/><rect x="28" y="42.1" width="0.8" height="1.8" fill="#d4a872" opacity="0.68"/><rect x="29" y="42.1" width="0.8" height="1.8" fill="#d4a872" opacity="0.68"/><rect x="30" y="42.7" width="0.8" height="1.2" fill="#d4a872" opacity="0.62"/><rect x="31" y="42.1" width="0.8" height="1.8" fill="#d4a872" opacity="0.68"/><rect x="32" y="42.1" width="0.8" height="1.8" fill="#d4a872" opacity="0.68"/><rect x="33" y="42.7" width="0.8" height="1.2" fill="#d4a872" opacity="0.62"/><rect x="34" y="42.7" width="0.8" height="1.2" fill="#d4a872" opacity="0.62"/><rect x="35" y="42.7" width="0.8" height="1.2" fill="#d4a872" opacity="0.62"/><rect x="36" y="42.1" width="0.8" height="1.8" fill="#d4a872" opacity="0.68"/><rect x="37" y="42.5" width="0.8" height="1.0" fill="#d4d4d4" opacity="0.45"/><rect x="2" y="44.5" width="0.8" height="1.0" fill="#9cdcfe" opacity="0.45"/><rect x="3" y="44.7" width="0.8" height="1.2" fill="#9cdcfe" opacity="0.62"/><rect x="4" y="44.7" width="0.8" height="1.2" fill="#9cdcfe" opacity="0.62"/><rect x="5" y="44.7" width="0.8" height="1.2" fill="#9cdcfe" opacity="0.62"/><rect x="6" y="44.5" width="0.8" height="1.0" fill="#9cdcfe" opacity="0.45"/><rect x="7" y="44.7" width="0.8" height="1.2" fill="#9cdcfe" opacity="0.62"/><rect x="8" y="44.7" width="0.8" height="1.2" fill="#9cdcfe" opacity="0.62"/><rect x="9" y="44.7" width="0.8" height="1.2" fill="#9cdcfe" opacity="0.62"/><rect x="10" y="44.5" width="0.8" height="1.0" fill="#9cdcfe" opacity="0.45"/><rect x="11" y="44.1" width="0.8" height="1.8" fill="#9cdcfe" opacity="0.68"/><rect x="12" y="44.7" width="0.8" height="1.2" fill="#9cdcfe" opacity="0.62"/><rect x="13" y="44.7" width="0.8" height="1.2" fill="#9cdcfe" opacity="0.62"/><rect x="14" y="44.1" width="0.8" height="1.8" fill="#9cdcfe" opacity="0.68"/><rect x="15" y="44.5" width="0.8" height="1.0" fill="#9cdcfe" opacity="0.45"/><rect x="16" y="44.7" width="0.8" height="1.2" fill="#9cdcfe" opacity="0.62"/><rect x="17" y="44.7" width="0.8" height="1.2" fill="#9cdcfe" opacity="0.62"/><rect x="18" y="44.7" width="0.8" height="1.2" fill="#9cdcfe" opacity="0.62"/><rect x="19" y="44.7" width="0.8" height="1.2" fill="#9cdcfe" opacity="0.62"/><rect x="20" y="44.1" width="0.8" height="1.8" fill="#9cdcfe" opacity="0.68"/><rect x="21" y="44.1" width="0.8" height="1.8" fill="#9cdcfe" opacity="0.68"/><rect x="22" y="44.1" width="0.8" height="1.8" fill="#9cdcfe" opacity="0.68"/><rect x="23" y="44.7" width="0.8" height="1.2" fill="#9cdcfe" opacity="0.62"/><rect x="24" y="44.7" width="0.8" height="1.6" fill="#9cdcfe" opacity="0.62"/><rect x="25" y="44.5" width="0.8" height="1.0" fill="#d4d4d4" opacity="0.45"/><rect x="27" y="44.7" width="0.8" height="1.6" fill="#d4a872" opacity="0.62"/><rect x="28" y="44.7" width="0.8" height="1.2" fill="#d4a872" opacity="0.62"/><rect x="29" y="44.7" width="0.8" height="1.2" fill="#d4a872" opacity="0.62"/><rect x="30" y="44.7" width="0.8" height="1.6" fill="#d4a872" opacity="0.62"/><rect x="31" y="44.7" width="0.8" height="1.2" fill="#d4a872" opacity="0.62"/><rect x="32" y="44.7" width="0.8" height="1.2" fill="#d4a872" opacity="0.62"/><rect x="33" y="44.7" width="0.8" height="1.2" fill="#d4a872" opacity="0.62"/><rect x="34" y="44.1" width="0.8" height="1.8" fill="#d4a872" opacity="0.68"/><rect x="35" y="44.7" width="0.8" height="1.2" fill="#d4a872" opacity="0.62"/><rect x="36" y="44.5" width="0.8" height="1.0" fill="#d4d4d4" opacity="0.45"/><rect x="2" y="46.1" width="0.8" height="1.8" fill="#9cdcfe" opacity="0.68"/><rect x="3" y="46.7" width="0.8" height="1.2" fill="#9cdcfe" opacity="0.62"/><rect x="4" y="46.7" width="0.8" height="1.2" fill="#9cdcfe" opacity="0.62"/><rect x="5" y="46.1" width="0.8" height="1.8" fill="#9cdcfe" opacity="0.68"/><rect x="6" y="46.5" width="0.8" height="1.0" fill="#9cdcfe" opacity="0.45"/><rect x="7" y="46.7" width="0.8" height="1.2" fill="#9cdcfe" opacity="0.62"/><rect x="8" y="46.1" width="0.8" height="1.8" fill="#9cdcfe" opacity="0.68"/><rect x="9" y="46.1" width="0.8" height="1.8" fill="#9cdcfe" opacity="0.68"/><rect x="10" y="46.7" width="0.8" height="1.6" fill="#9cdcfe" opacity="0.62"/><rect x="11" y="46.7" width="0.8" height="1.2" fill="#9cdcfe" opacity="0.62"/><rect x="12" y="46.5" width="0.8" height="1.0" fill="#d4d4d4" opacity="0.45"/><rect x="14" y="46.7" width="0.8" height="1.2" fill="#d4a872" opacity="0.62"/><rect x="15" y="46.7" width="0.8" height="1.2" fill="#d4a872" opacity="0.62"/><rect x="16" y="46.7" width="0.8" height="1.2" fill="#d4a872" opacity="0.62"/><rect x="17" y="46.1" width="0.8" height="1.8" fill="#d4a872" opacity="0.68"/><rect x="18" y="46.7" width="0.8" height="1.2" fill="#d4a872" opacity="0.62"/><rect x="19" y="46.7" width="0.8" height="1.2" fill="#d4a872" opacity="0.62"/><rect x="20" y="46.5" width="0.8" height="1.0" fill="#d4d4d4" opacity="0.45"/><rect x="2" y="48.7" width="0.8" height="1.2" fill="#9cdcfe" opacity="0.62"/><rect x="3" y="48.7" width="0.8" height="1.2" fill="#9cdcfe" opacity="0.62"/><rect x="4" y="48.1" width="0.8" height="1.8" fill="#9cdcfe" opacity="0.68"/><rect x="5" y="48.7" width="0.8" height="1.2" fill="#9cdcfe" opacity="0.62"/><rect x="6" y="48.7" width="0.8" height="1.2" fill="#9cdcfe" opacity="0.62"/><rect x="7" y="48.5" width="0.8" height="1.0" fill="#d4d4d4" opacity="0.45"/><rect x="9" y="48.5" width="0.8" height="1.0" fill="#d4a872" opacity="0.45"/><rect x="10" y="48.1" width="0.8" height="1.8" fill="#d4a872" opacity="0.68"/><rect x="11" y="48.7" width="0.8" height="1.2" fill="#d4a872" opacity="0.62"/><rect x="12" y="48.1" width="0.8" height="1.8" fill="#d4a872" opacity="0.68"/><rect x="13" y="48.7" width="0.8" height="1.2" fill="#d4a872" opacity="0.62"/><rect x="14" y="48.1" width="0.8" height="1.8" fill="#d4a872" opacity="0.68"/><rect x="15" y="48.1" width="0.8" height="1.8" fill="#d4a872" opacity="0.68"/><rect x="16" y="48.5" width="0.8" height="1.0" fill="#d4d4d4" opacity="0.45"/><rect x="2" y="50.7" width="0.8" height="1.2" fill="#9cdcfe" opacity="0.62"/><rect x="3" y="50.7" width="0.8" height="1.2" fill="#9cdcfe" opacity="0.62"/><rect x="4" y="50.7" width="0.8" height="1.2" fill="#9cdcfe" opacity="0.62"/><rect x="5" y="50.7" width="0.8" height="1.6" fill="#9cdcfe" opacity="0.62"/><rect x="6" y="50.1" width="0.8" height="1.8" fill="#9cdcfe" opacity="0.68"/><rect x="7" y="50.7" width="0.8" height="1.2" fill="#9cdcfe" opacity="0.62"/><rect x="8" y="50.5" width="0.8" height="1.0" fill="#9cdcfe" opacity="0.45"/><rect x="9" y="50.1" width="0.8" height="1.8" fill="#9cdcfe" opacity="0.68"/><rect x="10" y="50.7" width="0.8" height="1.2" fill="#9cdcfe" opacity="0.62"/><rect x="11" y="50.7" width="0.8" height="1.6" fill="#9cdcfe" opacity="0.62"/><rect x="12" y="50.5" width="0.8" height="1.0" fill="#d4d4d4" opacity="0.45"/><rect x="14" y="50.1" width="0.8" height="1.8" fill="#b5cea8" opacity="0.68"/><rect x="15" y="50.1" width="0.8" height="1.8" fill="#b5cea8" opacity="0.68"/><rect x="16" y="50.7" width="0.8" height="1.6" fill="#b5cea8" opacity="0.62"/><rect x="17" y="50.7" width="0.8" height="1.2" fill="#b5cea8" opacity="0.62"/><rect x="18" y="50.5" width="0.8" height="1.0" fill="#d4d4d4" opacity="0.45"/><rect x="0" y="52.5" width="0.8" height="1.0" fill="#d4d4d4" opacity="0.45"/><rect x="0" y="54.5" width="0.8" height="1.0" fill="#808080" opacity="0.45"/><rect x="1" y="54.5" width="0.8" height="1.0" fill="#808080" opacity="0.45"/><rect x="2" y="54.7" width="0.8" height="1.2" fill="#569cd6" opacity="0.62"/><rect x="3" y="54.1" width="0.8" height="1.8" fill="#569cd6" opacity="0.68"/><rect x="4" y="54.7" width="0.8" height="1.6" fill="#569cd6" opacity="0.62"/><rect x="5" y="54.1" width="0.8" height="1.8" fill="#569cd6" opacity="0.68"/><rect x="6" y="54.7" width="0.8" height="1.2" fill="#569cd6" opacity="0.62"/><rect x="7" y="54.5" width="0.8" height="1.0" fill="#808080" opacity="0.45"/></svg>
<div class="abs" style="left:1071px;top:43px;width:1px;height:403px;background:#3c3c3c"></div>
<div class="abs" style="left:1072px;top:78px;width:16px;height:2px;background:#a0a0a0"></div>
<div class="abs" style="left:1072px;top:80px;width:5px;height:11px;background:#1a68aa"></div>
<div class="abs" style="left:239px;top:138px;width:413px;height:285px;background:#252526;border:1px solid #454545;overflow:hidden">
<div class="item mono" style="top:0.0px;background:#062f4a">
<svg class="abs" style="left:4px;top:2px" width="24" height="22" viewBox="0 0 24 22">
<rect x="11.5" y="3.8" width="9" height="7.7" rx="1.4" fill="#062f4a" stroke="#e8ab53" stroke-width="1.7"/>
<path d="M13 6.4 H18.9" stroke="#e8ab53" stroke-width="1"/><path d="M13 8.9 H18.9" stroke="#b8883f" stroke-width="1.3"/>
<rect x="3.6" y="10.2" width="9.4" height="7.7" rx="1.4" fill="#062f4a" stroke="#e8ab53" stroke-width="1.7"/>
<path d="M5.4 12.8 H11.2" stroke="#b8883f" stroke-width="1.1"/><path d="M5.4 15.4 H11.2" stroke="#e8ab53" stroke-width="1.1"/>
</svg>
<span class="abs" style="left:30px;top:2.5px"><span class="h">v-</span>bind</span></div>
<div class="item mono" style="top:23.75px;background:#252526">
<svg class="abs" style="left:4px;top:2px" width="24" height="22" viewBox="0 0 24 22">
<rect x="11.5" y="3.8" width="9" height="7.7" rx="1.4" fill="#252526" stroke="#e8ab53" stroke-width="1.7"/>
<path d="M13 6.4 H18.9" stroke="#e8ab53" stroke-width="1"/><path d="M13 8.9 H18.9" stroke="#b8883f" stroke-width="1.3"/>
<rect x="3.6" y="10.2" width="9.4" height="7.7" rx="1.4" fill="#252526" stroke="#e8ab53" stroke-width="1.7"/>
<path d="M5.4 12.8 H11.2" stroke="#b8883f" stroke-width="1.1"/><path d="M5.4 15.4 H11.2" stroke="#e8ab53" stroke-width="1.1"/>
</svg>
<span class="abs" style="left:30px;top:2.5px"><span class="h">v-</span>cloak</span></div>
<div class="item mono" style="top:47.5px;background:#252526">
<svg class="abs" style="left:4px;top:2px" width="24" height="22" viewBox="0 0 24 22">
<rect x="11.5" y="3.8" width="9" height="7.7" rx="1.4" fill="#252526" stroke="#e8ab53" stroke-width="1.7"/>
<path d="M13 6.4 H18.9" stroke="#e8ab53" stroke-width="1"/><path d="M13 8.9 H18.9" stroke="#b8883f" stroke-width="1.3"/>
<rect x="3.6" y="10.2" width="9.4" height="7.7" rx="1.4" fill="#252526" stroke="#e8ab53" stroke-width="1.7"/>
<path d="M5.4 12.8 H11.2" stroke="#b8883f" stroke-width="1.1"/><path d="M5.4 15.4 H11.2" stroke="#e8ab53" stroke-width="1.1"/>
</svg>
<span class="abs" style="left:30px;top:2.5px"><span class="h">v-</span>else</span></div>
<div class="item mono" style="top:71.25px;background:#252526">
<svg class="abs" style="left:4px;top:2px" width="24" height="22" viewBox="0 0 24 22">
<rect x="11.5" y="3.8" width="9" height="7.7" rx="1.4" fill="#252526" stroke="#e8ab53" stroke-width="1.7"/>
<path d="M13 6.4 H18.9" stroke="#e8ab53" stroke-width="1"/><path d="M13 8.9 H18.9" stroke="#b8883f" stroke-width="1.3"/>
<rect x="3.6" y="10.2" width="9.4" height="7.7" rx="1.4" fill="#252526" stroke="#e8ab53" stroke-width="1.7"/>
<path d="M5.4 12.8 H11.2" stroke="#b8883f" stroke-width="1.1"/><path d="M5.4 15.4 H11.2" stroke="#e8ab53" stroke-width="1.1"/>
</svg>
<span class="abs" style="left:30px;top:2.5px"><span class="h">v-</span>else-if</span></div>
<div class="item mono" style="top:95.0px;background:#252526">
<svg class="abs" style="left:4px;top:2px" width="24" height="22" viewBox="0 0 24 22">
<rect x="11.5" y="3.8" width="9" height="7.7" rx="1.4" fill="#252526" stroke="#e8ab53" stroke-width="1.7"/>
<path d="M13 6.4 H18.9" stroke="#e8ab53" stroke-width="1"/><path d="M13 8.9 H18.9" stroke="#b8883f" stroke-width="1.3"/>
<rect x="3.6" y="10.2" width="9.4" height="7.7" rx="1.4" fill="#252526" stroke="#e8ab53" stroke-width="1.7"/>
<path d="M5.4 12.8 H11.2" stroke="#b8883f" stroke-width="1.1"/><path d="M5.4 15.4 H11.2" stroke="#e8ab53" stroke-width="1.1"/>
</svg>
<span class="abs" style="left:30px;top:2.5px"><span class="h">v-</span>for</span></div>
<div class="item mono" style="top:118.75px;background:#252526">
<svg class="abs" style="left:4px;top:2px" width="24" height="22" viewBox="0 0 24 22">
<rect x="11.5" y="3.8" width="9" height="7.7" rx="1.4" fill="#252526" stroke="#e8ab53" stroke-width="1.7"/>
<path d="M13 6.4 H18.9" stroke="#e8ab53" stroke-width="1"/><path d="M13 8.9 H18.9" stroke="#b8883f" stroke-width="1.3"/>
<rect x="3.6" y="10.2" width="9.4" height="7.7" rx="1.4" fill="#252526" stroke="#e8ab53" stroke-width="1.7"/>
<path d="M5.4 12.8 H11.2" stroke="#b8883f" stroke-width="1.1"/><path d="M5.4 15.4 H11.2" stroke="#e8ab53" stroke-width="1.1"/>
</svg>
<span class="abs" style="left:30px;top:2.5px"><span class="h">v-</span>html</span></div>
<div class="item mono" style="top:142.5px;background:#252526">
<svg class="abs" style="left:4px;top:2px" width="24" height="22" viewBox="0 0 24 22">
<rect x="11.5" y="3.8" width="9" height="7.7" rx="1.4" fill="#252526" stroke="#e8ab53" stroke-width="1.7"/>
<path d="M13 6.4 H18.9" stroke="#e8ab53" stroke-width="1"/><path d="M13 8.9 H18.9" stroke="#b8883f" stroke-width="1.3"/>
<rect x="3.6" y="10.2" width="9.4" height="7.7" rx="1.4" fill="#252526" stroke="#e8ab53" stroke-width="1.7"/>
<path d="M5.4 12.8 H11.2" stroke="#b8883f" stroke-width="1.1"/><path d="M5.4 15.4 H11.2" stroke="#e8ab53" stroke-width="1.1"/>
</svg>
<span class="abs" style="left:30px;top:2.5px"><span class="h">v-</span>if</span></div>
<div class="item mono" style="top:166.25px;background:#252526">
<svg class="abs" style="left:4px;top:2px" width="24" height="22" viewBox="0 0 24 22">
<rect x="11.5" y="3.8" width="9" height="7.7" rx="1.4" fill="#252526" stroke="#e8ab53" stroke-width="1.7"/>
<path d="M13 6.4 H18.9" stroke="#e8ab53" stroke-width="1"/><path d="M13 8.9 H18.9" stroke="#b8883f" stroke-width="1.3"/>
<rect x="3.6" y="10.2" width="9.4" height="7.7" rx="1.4" fill="#252526" stroke="#e8ab53" stroke-width="1.7"/>
<path d="M5.4 12.8 H11.2" stroke="#b8883f" stroke-width="1.1"/><path d="M5.4 15.4 H11.2" stroke="#e8ab53" stroke-width="1.1"/>
</svg>
<span class="abs" style="left:30px;top:2.5px"><span class="h">v-</span>model</span></div>
<div class="item mono" style="top:190.0px;background:#252526">
<svg class="abs" style="left:4px;top:2px" width="24" height="22" viewBox="0 0 24 22">
<rect x="11.5" y="3.8" width="9" height="7.7" rx="1.4" fill="#252526" stroke="#e8ab53" stroke-width="1.7"/>
<path d="M13 6.4 H18.9" stroke="#e8ab53" stroke-width="1"/><path d="M13 8.9 H18.9" stroke="#b8883f" stroke-width="1.3"/>
<rect x="3.6" y="10.2" width="9.4" height="7.7" rx="1.4" fill="#252526" stroke="#e8ab53" stroke-width="1.7"/>
<path d="M5.4 12.8 H11.2" stroke="#b8883f" stroke-width="1.1"/><path d="M5.4 15.4 H11.2" stroke="#e8ab53" stroke-width="1.1"/>
</svg>
<span class="abs" style="left:30px;top:2.5px"><span class="h">v-</span>on</span></div>
<div class="item mono" style="top:213.75px;background:#252526">
<svg class="abs" style="left:4px;top:2px" width="24" height="22" viewBox="0 0 24 22">
<rect x="11.5" y="3.8" width="9" height="7.7" rx="1.4" fill="#252526" stroke="#e8ab53" stroke-width="1.7"/>
<path d="M13 6.4 H18.9" stroke="#e8ab53" stroke-width="1"/><path d="M13 8.9 H18.9" stroke="#b8883f" stroke-width="1.3"/>
<rect x="3.6" y="10.2" width="9.4" height="7.7" rx="1.4" fill="#252526" stroke="#e8ab53" stroke-width="1.7"/>
<path d="M5.4 12.8 H11.2" stroke="#b8883f" stroke-width="1.1"/><path d="M5.4 15.4 H11.2" stroke="#e8ab53" stroke-width="1.1"/>
</svg>
<span class="abs" style="left:30px;top:2.5px"><span class="h">v-</span>once</span></div>
<div class="item mono" style="top:237.5px;background:#252526">
<svg class="abs" style="left:4px;top:2px" width="24" height="22" viewBox="0 0 24 22">
<rect x="11.5" y="3.8" width="9" height="7.7" rx="1.4" fill="#252526" stroke="#e8ab53" stroke-width="1.7"/>
<path d="M13 6.4 H18.9" stroke="#e8ab53" stroke-width="1"/><path d="M13 8.9 H18.9" stroke="#b8883f" stroke-width="1.3"/>
<rect x="3.6" y="10.2" width="9.4" height="7.7" rx="1.4" fill="#252526" stroke="#e8ab53" stroke-width="1.7"/>
<path d="M5.4 12.8 H11.2" stroke="#b8883f" stroke-width="1.1"/><path d="M5.4 15.4 H11.2" stroke="#e8ab53" stroke-width="1.1"/>
</svg>
<span class="abs" style="left:30px;top:2.5px"><span class="h">v-</span>pre</span></div>
<div class="item mono" style="top:261.25px;background:#252526">
<svg class="abs" style="left:4px;top:2px" width="24" height="22" viewBox="0 0 24 22">
<rect x="11.5" y="3.8" width="9" height="7.7" rx="1.4" fill="#252526" stroke="#e8ab53" stroke-width="1.7"/>
<path d="M13 6.4 H18.9" stroke="#e8ab53" stroke-width="1"/><path d="M13 8.9 H18.9" stroke="#b8883f" stroke-width="1.3"/>
<rect x="3.6" y="10.2" width="9.4" height="7.7" rx="1.4" fill="#252526" stroke="#e8ab53" stroke-width="1.7"/>
<path d="M5.4 12.8 H11.2" stroke="#b8883f" stroke-width="1.1"/><path d="M5.4 15.4 H11.2" stroke="#e8ab53" stroke-width="1.1"/>
</svg>
<span class="abs" style="left:30px;top:2.5px"><span class="h">v-</span>show</span></div>
</div>
<div class="abs" style="left:651px;top:138px;width:413px;height:59px;background:#252526;border:1px solid #454545"></div>
<div class="abs sans" style="left:659px;top:147px;font-size:17.5px;line-height:22.75px;color:#cccccc;white-space:pre">Dynamically binds one or more attributes, or a
component prop to an expression.</div>
<svg class="abs" style="left:1038px;top:146px" width="12" height="12" viewBox="0 0 12 12"><path d="M2.5 2.5 L9.5 9.5 M9.5 2.5 L2.5 9.5" stroke="#c5c5c5" stroke-width="1.8"/></svg>
</body></html>
